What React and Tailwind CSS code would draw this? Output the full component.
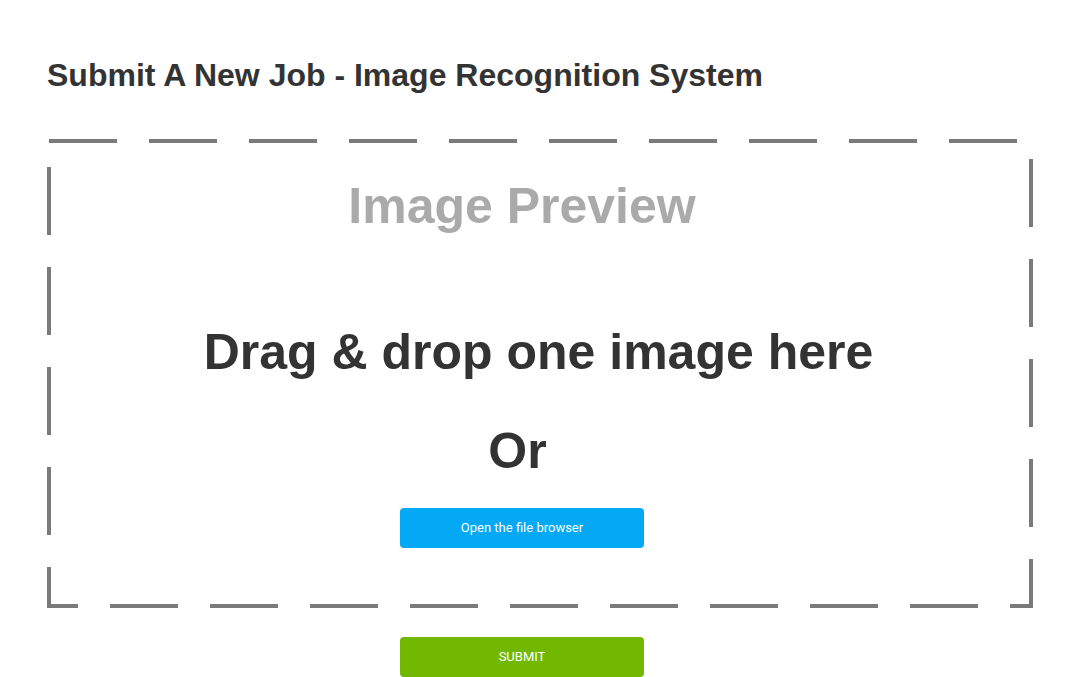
const dashedBorder =
  '[background-image:repeating-linear-gradient(90deg,#7a7a7a_0_68px,transparent_68px_100px),repeating-linear-gradient(90deg,#7a7a7a_0_31px,transparent_31px_63px,#7a7a7a_63px_100px),repeating-linear-gradient(180deg,transparent_0_28px,#7a7a7a_28px_96px,transparent_96px_100px),repeating-linear-gradient(180deg,transparent_0_20px,#7a7a7a_20px_88px,transparent_88px_100px)]';

export default function App() {
  return (
    <div className="min-h-[677px] bg-white pl-[47px] font-['Liberation_Sans',Arial,sans-serif]">
      <h1 className="pt-[59px] text-[32px] font-bold leading-none text-[#333333]">
        Submit A New Job - Image Recognition System
      </h1>

      <div
        className={`mt-[48px] h-[469px] w-[986px] ${dashedBorder} [background-size:986px_4px,986px_4px,4px_469px,4px_469px] [background-position:2px_0,0_465px,0_0,982px_0] [background-repeat:no-repeat,no-repeat,no-repeat,no-repeat]`}
      >
        <div className="flex flex-col items-center pr-[36px]">
          <h2 className="mt-[42px] text-[50px] font-bold leading-none text-[#aaaaaa]">
            Image Preview
          </h2>
          <p className="mt-[96px] pl-[33px] text-[50px] font-bold leading-none text-[#333333]">
            Drag &amp; drop one image here
          </p>
          <p className="mt-[49px] pr-[9px] text-[50px] font-bold leading-none text-[#333333]">Or</p>
          <button className="mt-[32px] h-[40px] w-[244px] rounded-[4px] bg-[#03a9f4] font-['Roboto',sans-serif] text-[13px] text-white">
            Open the file browser
          </button>
        </div>
      </div>

      <div className="flex w-[986px] justify-center pr-[36px]">
        <button className="mt-[29px] h-[40px] w-[244px] rounded-[4px] bg-[#72b700] font-['Roboto',sans-serif] text-[13px] text-white">
          SUBMIT
        </button>
      </div>
    </div>
  );
}
